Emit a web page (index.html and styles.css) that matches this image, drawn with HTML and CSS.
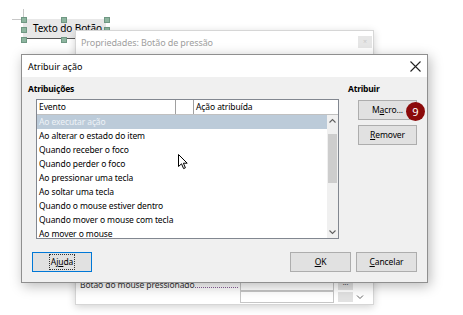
FILE: index.html
```html
<!DOCTYPE html>
<html lang="pt">

<head>
    <meta charset="UTF-8">
    <title>Atribuir ação</title>
    <link rel="stylesheet" href="styles.css">
</head>

<body>
    <div class="desk">
        <!-- controle selecionado no formulário -->
        <div class="design-btn">Texto do Botão</div>
        <span class="cross-v"></span>
        <span class="cross-h"></span>
        <span class="hd" style="left:21px;top:17px"></span>
        <span class="hd" style="left:61px;top:17px"></span>
        <span class="hd" style="left:104px;top:17px"></span>
        <span class="hd" style="left:21px;top:27px"></span>
        <span class="hd" style="left:104px;top:27px"></span>
        <span class="hd" style="left:21px;top:37px"></span>
        <span class="hd" style="left:61px;top:37px"></span>

        <!-- janela de propriedades (atrás) -->
        <div class="props">
            <div class="props-title">
                <span>Propriedades: Botão de pressão</span>
                <span class="props-close">×</span>
            </div>
            <div class="props-body">
                <div class="prow">
                    <span class="plabel"><span>Botão do mouse pressionado</span><span class="leader"></span></span>
                    <span class="pbox"></span>
                    <span class="pbtn">...</span>
                </div>
                <div class="prow">
                    <span class="plabel"></span>
                    <span class="pbox"></span>
                    <span class="pbtn"></span>
                    <svg class="pchev" width="8" height="6" viewBox="0 0 8 6">
                        <path d="M1 1.5 L4 4.5 L7 1.5" stroke="#666" stroke-width="1" fill="none" />
                    </svg>
                </div>
            </div>
        </div>

        <!-- diálogo principal -->
        <div class="dialog">
            <div class="dlg-title">
                <span>Atribuir ação</span>
                <svg class="close" width="11" height="11" viewBox="0 0 11 11">
                    <path d="M0.5 0.5 L10.5 10.5 M10.5 0.5 L0.5 10.5" stroke="#222" stroke-width="1.1" fill="none" />
                </svg>
            </div>
            <div class="dlg-body">
                <div class="main">
                    <div class="col-left">
                        <div class="label">Atribuições</div>
                        <div class="list">
                            <div class="list-head">
                                <div class="hcell c1">Evento</div>
                                <div class="hcell c2"></div>
                                <div class="hcell c3">Ação atribuída</div>
                            </div>
                            <div class="list-body">
                                <div class="rows">
                                    <div class="row sel">Ao executar ação</div>
                                    <div class="row">Ao alterar o estado do item</div>
                                    <div class="row">Quando receber o foco</div>
                                    <div class="row">Quando perder o foco</div>
                                    <div class="row">Ao pressionar uma tecla</div>
                                    <div class="row">Ao soltar uma tecla</div>
                                    <div class="row">Quando o mouse estiver dentro</div>
                                    <div class="row">Quando mover o mouse com tecla</div>
                                    <div class="row">Ao mover o mouse</div>
                                </div>
                                <div class="scroll">
                                    <svg width="11" height="12" viewBox="0 0 11 12">
                                        <path d="M2.5 7.5 L5.5 4.5 L8.5 7.5" stroke="#606060" stroke-width="1.1" fill="none" />
                                    </svg>
                                    <div class="thumb"></div>
                                    <div class="track"></div>
                                    <svg width="11" height="12" viewBox="0 0 11 12">
                                        <path d="M2.5 4.5 L5.5 7.5 L8.5 4.5" stroke="#606060" stroke-width="1.1" fill="none" />
                                    </svg>
                                </div>
                            </div>
                        </div>
                    </div>
                    <div class="col-right">
                        <div class="label">Atribuir</div>
                        <div class="btn macro">M<u>a</u>cro...<span class="badge">9</span></div>
                        <div class="btn"><u>R</u>emover</div>
                    </div>
                </div>
                <div class="footer">
                    <div class="btn help"><span class="focus">Aj<u>u</u>da</span></div>
                    <div class="right-btns">
                        <div class="btn wide"><u>O</u>K</div>
                        <div class="btn wide"><u>C</u>ancelar</div>
                    </div>
                </div>
            </div>
        </div>

        <!-- ponteiro do mouse -->
        <svg class="pointer" width="10" height="16" viewBox="0 0 10 16">
            <path d="M0.5 0.5 L0.5 12.5 L3.5 9.8 L5.6 14.6 L7.4 13.8 L5.4 9.2 L9.2 9.2 Z" fill="#fff" stroke="#000" stroke-width="1" stroke-linejoin="round" />
        </svg>
    </div>
</body>

</html>
```

FILE: styles.css
```css
body {
    margin: 0;
    background: #fff;
    font-family: "Noto Sans", "Open Sans", sans-serif;
    font-size: 8.5px;
    letter-spacing: -0.1px;
    color: #000;
}

.desk {
    position: relative;
    width: 463px;
    height: 315px;
    overflow: hidden;
}

/* controle no formulário */
.design-btn {
    position: absolute;
    left: 23px;
    top: 19px;
    width: 83px;
    height: 20px;
    box-sizing: border-box;
    background: #e8e8e8;
    border-bottom: 1px solid #555;
    line-height: 19px;
    padding-left: 10px;
    font-size: 10px;
    white-space: nowrap;
}

.cross-v {
    position: absolute;
    left: 23px;
    top: 9px;
    width: 1px;
    height: 10px;
    background: #c8c8c8;
}

.cross-h {
    position: absolute;
    left: 12px;
    top: 19px;
    width: 11px;
    height: 1px;
    background: #c8c8c8;
}

.hd {
    position: absolute;
    width: 4px;
    height: 4px;
    background: #8db59f;
    border: 1px solid #6f9883;
}

/* janela de propriedades */
.props {
    position: absolute;
    left: 75px;
    top: 30px;
    width: 299px;
    height: 275px;
    box-sizing: border-box;
    background: #fff;
    border: 1px solid #d6d6d6;
    box-shadow: 0 2px 8px rgba(0, 0, 0, 0.18);
    display: flex;
    flex-direction: column;
}

.props-title {
    height: 22px;
    display: flex;
    align-items: center;
    justify-content: space-between;
    padding: 0 1px 0 5px;
    color: #a0a0a0;
    font-size: 9px;
}

.props-close {
    width: 14px;
    height: 12px;
    background: #e6e6e6;
    color: #c8c8c8;
    font-size: 7px;
    line-height: 12px;
    text-align: center;
}

.props-body {
    flex: 1;
    display: flex;
    flex-direction: column;
    justify-content: flex-end;
    gap: 2px;
    padding: 0 0 2px 4px;
}

.prow {
    display: flex;
    align-items: center;
    height: 10px;
}

.plabel {
    width: 158px;
    margin-right: 2px;
    display: flex;
    align-items: baseline;
    font-size: 8.5px;
    line-height: 10px;
    color: #333;
    white-space: nowrap;
}

.leader {
    flex: 1;
    border-bottom: 1px dotted #8a5f9a;
}

.pbox {
    width: 92px;
    height: 10px;
    border: 1px solid #c6c6c6;
    background: #fff;
}

.pbtn {
    width: 15px;
    height: 10px;
    margin-left: 4px;
    background: #e2e2e2;
    font-size: 7px;
    line-height: 6px;
    text-align: center;
    color: #444;
}

.pchev {
    margin-left: 3px;
}

/* diálogo principal */
.dialog {
    position: absolute;
    left: 21px;
    top: 54px;
    width: 407px;
    height: 229px;
    box-sizing: border-box;
    border: 1px solid #8f8f8f;
    background: #f0f0f0;
    box-shadow: 2px 3px 12px rgba(0, 0, 0, 0.28);
    display: flex;
    flex-direction: column;
}

.dlg-title {
    height: 22px;
    flex: none;
    background: #fff;
    display: flex;
    align-items: center;
    justify-content: space-between;
    padding: 0 6px 0 6px;
    font-size: 9px;
    letter-spacing: 0;
}

.close {
    display: block;
}

.dlg-body {
    flex: 1;
    padding: 4px 10px 0 6px;
    display: flex;
    flex-direction: column;
}

.main {
    display: flex;
    gap: 9px;
}

.label {
    font-weight: bold;
    height: 16px;
    line-height: 16px;
    font-size: 8.5px;
    letter-spacing: -0.2px;
}

.col-left {
    width: 313px;
}

.list {
    margin: 2px 0 0 8px;
    height: 140px;
    box-sizing: border-box;
    border: 1px solid #828790;
    background: #fff;
    display: flex;
    flex-direction: column;
}

.list-head {
    display: flex;
    height: 14px;
    flex: none;
    border-bottom: 1px solid #c0c0c0;
}

.hcell {
    line-height: 14px;
    padding-left: 2px;
    white-space: nowrap;
}

.c1 {
    width: 136px;
    border-right: 1px solid #a0a0a0;
}

.c2 {
    width: 15px;
    border-right: 1px solid #a0a0a0;
}

.c3 {
    flex: 1;
}

.list-body {
    flex: 1;
    display: flex;
    overflow: hidden;
}

.rows {
    flex: 1;
}

.row {
    height: 14px;
    line-height: 14px;
    padding-left: 2px;
    white-space: nowrap;
}

.row.sel {
    background: #bccbd9;
    color: #eef2f7;
}

.scroll {
    width: 11px;
    background: #f0f0f0;
    display: flex;
    flex-direction: column;
}

.scroll svg {
    display: block;
    flex: none;
}

.thumb {
    height: 49px;
    margin: 7px 1px 0 1px;
    background: #cdcdcd;
}

.track {
    flex: 1;
}

.col-right {
    flex: 1;
}

.btn {
    position: relative;
    height: 20px;
    box-sizing: border-box;
    border: 1px solid #adadad;
    background: #e1e1e1;
    text-align: center;
    line-height: 18px;
}

.col-right .btn {
    width: 59px;
    margin-left: 10px;
}

.macro {
    margin-top: 3px;
}

.macro + .btn {
    margin-top: 5px;
}

.badge {
    position: absolute;
    left: 47px;
    top: 1px;
    width: 19px;
    height: 19px;
    border-radius: 50%;
    background: #8b0a0a;
    color: #fff;
    font-size: 11px;
    line-height: 19px;
    text-align: center;
    letter-spacing: 0;
}

.footer {
    margin-top: 13px;
    display: flex;
    justify-content: space-between;
}

.help {
    width: 60px;
    margin-left: 4px;
    border-color: #0078d7;
}

.focus {
    border: 1px dotted #333;
    padding: 0 1px;
    line-height: 14px;
    display: inline-block;
}

.right-btns {
    display: flex;
    gap: 5px;
}

.btn.wide {
    width: 61px;
}

.pointer {
    position: absolute;
    left: 178px;
    top: 154px;
}
```
